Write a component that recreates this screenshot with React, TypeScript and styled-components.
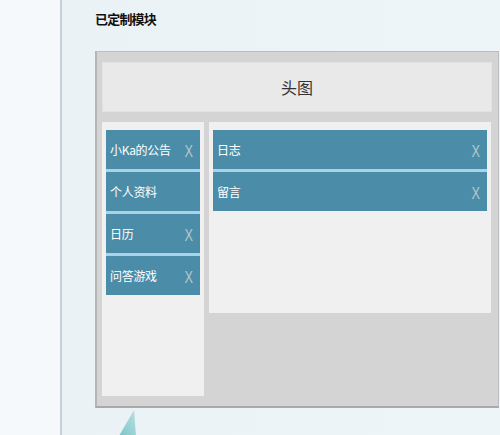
import React from "react";
import styled, { createGlobalStyle } from "styled-components";

const GlobalStyle = createGlobalStyle`
  html, body {
    margin: 0;
    padding: 0;
    background: #ebf3f7;
    font-family: "Noto Sans CJK SC", "Noto Sans", sans-serif;
  }
`;

const Page = styled.div`
  display: flex;
  width: 500px;
  height: 435px;
  overflow: hidden;
`;

const Sidebar = styled.div`
  width: 60px;
  flex-shrink: 0;
  background: #f5f9fc;
  border-right: 2px solid #c6d2db;
`;

const Main = styled.div`
  flex: 1;
  padding: 8px 0 0 33px;
  background: linear-gradient(90deg, #eaf2f6 0%, #eef5f9 100%);
`;

const Title = styled.h3`
  margin: 0;
  height: 22px;
  font-size: 13px;
  line-height: 22px;
  font-weight: 700;
  color: #111;
  letter-spacing: -0.8px;
`;

const Panel = styled.div`
  margin-top: 21px;
  width: 390px;
  padding: 10px 6px 10px 5px;
  background: #d4d4d4;
  border: 1px solid #bdbdbd;
  border-bottom: 2px solid #a9a9a9;
  border-left: 2px solid #b5b5b5;
`;

const Header = styled.div`
  height: 50px;
  display: flex;
  align-items: center;
  justify-content: center;
  background: #e9e9e9;
  border: 1px solid #e2e2e2;
  box-sizing: border-box;
  font-size: 16px;
  color: #333;
`;

const Columns = styled.div`
  margin-top: 10px;
  display: flex;
  align-items: flex-start;
  gap: 5px;
`;

const Column = styled.div<{ $width?: number; $height: number }>`
  ${(p) => (p.$width ? `width: ${p.$width}px;` : "flex: 1; margin-right: 1px;")}
  height: ${(p) => p.$height}px;
  box-sizing: border-box;
  padding: 8px 4px;
  background: #f0f0f0;
  display: flex;
  flex-direction: column;
`;

const Item = styled.div`
  height: 39px;
  flex-shrink: 0;
  display: flex;
  align-items: center;
  justify-content: space-between;
  padding: 0 6px 0 4px;
  background: #4b8da8;
  color: #fff;
  font-size: 12px;
  letter-spacing: -0.3px;

  & + & {
    border-top: 3px solid #a9d3e6;
  }
`;

const Close = styled.span`
  font-family: "Liberation Sans", Arial, sans-serif;
  font-size: 17px;
  line-height: 17px;
  padding-top: 3px;
  color: #b6c6cc;
  transform: scaleX(0.75);
`;

const Decor = styled.svg`
  display: block;
  margin: 2px 0 0 22px;
`;

const left = [
  { name: "小Ka的公告", close: true },
  { name: "个人资料", close: false },
  { name: "日历", close: true },
  { name: "问答游戏", close: true },
];

const right = [
  { name: "日志", close: true },
  { name: "留言", close: true },
];

export default function App() {
  return (
    <>
      <GlobalStyle />
      <Page>
        <Sidebar />
        <Main>
          <Title>已定制模块</Title>
          <Panel>
            <Header>头图</Header>
            <Columns>
              <Column $width={102} $height={274}>
                {left.map((m) => (
                  <Item key={m.name}>
                    <span>{m.name}</span>
                    {m.close && <Close>X</Close>}
                  </Item>
                ))}
              </Column>
              <Column $height={191}>
                {right.map((m) => (
                  <Item key={m.name}>
                    <span>{m.name}</span>
                    {m.close && <Close>X</Close>}
                  </Item>
                ))}
              </Column>
            </Columns>
          </Panel>
          <Decor width="24" height="26" viewBox="0 0 24 26">
            <defs>
              <linearGradient id="wedge" x1="1" y1="0" x2="0" y2="1">
                <stop offset="0" stopColor="#b9e0e2" />
                <stop offset="1" stopColor="#7cc6c6" />
              </linearGradient>
            </defs>
            <polygon points="17,0 19,26 2,26" fill="url(#wedge)" />
          </Decor>
        </Main>
      </Page>
    </>
  );
}
